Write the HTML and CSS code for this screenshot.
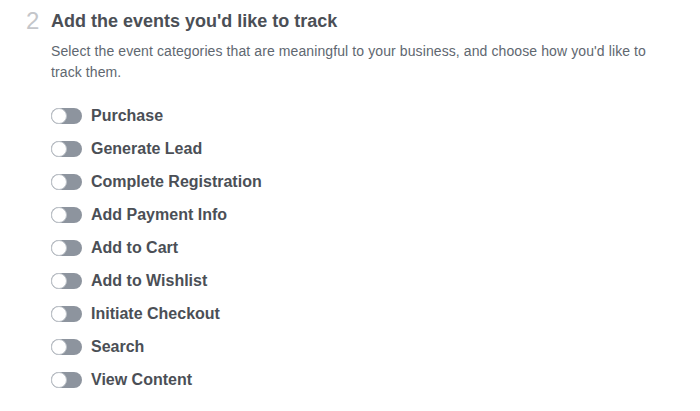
FILE: index.html
```html
<!DOCTYPE html>
<html>
<head>
    <title>Event Setup</title>
    <link rel="stylesheet" href="styles.css">
</head>
<body>
    <div class="step">
        <div class="step-num">2</div>
        <div class="step-body">
            <h2>Add the events you'd like to track</h2>
            <p class="desc">Select the event categories that are meaningful to your business, and choose how you'd like to track them.</p>
            <ul class="events">
                <li><span class="toggle"><span class="knob"></span></span>Purchase</li>
                <li><span class="toggle"><span class="knob"></span></span>Generate Lead</li>
                <li><span class="toggle"><span class="knob"></span></span>Complete Registration</li>
                <li><span class="toggle"><span class="knob"></span></span>Add Payment Info</li>
                <li><span class="toggle"><span class="knob"></span></span>Add to Cart</li>
                <li><span class="toggle"><span class="knob"></span></span>Add to Wishlist</li>
                <li><span class="toggle"><span class="knob"></span></span>Initiate Checkout</li>
                <li><span class="toggle"><span class="knob"></span></span>Search</li>
                <li><span class="toggle"><span class="knob"></span></span>View Content</li>
            </ul>
        </div>
    </div>
</body>
</html>
```

FILE: styles.css
```css
body {
    margin: 0;
    background-color: #fff;
    font-family: "Liberation Sans", Arial, sans-serif;
    color: #4b4f56;
}

.step {
    display: flex;
    padding: 7px 0 0 26px;
}

.step-num {
    width: 25px;
    font-size: 24px;
    line-height: 28px;
    color: #c4c6ca;
}

.step-body h2 {
    margin: 0;
    font-size: 18px;
    line-height: 28px;
    font-weight: bold;
    color: #4b4f56;
}

.desc {
    margin: 6px 0 0 0;
    max-width: 610px;
    font-size: 14px;
    line-height: 21px;
    color: #606770;
    letter-spacing: 0.1px;
}

.events {
    list-style: none;
    margin: 16px 0 0 0;
    padding: 0;
}

.events li {
    display: flex;
    align-items: center;
    height: 33.1px;
    font-size: 16px;
    font-weight: bold;
}

.toggle {
    position: relative;
    width: 31px;
    height: 16px;
    margin-right: 9px;
    border-radius: 8px;
    background-color: #8d949e;
}

.knob {
    position: absolute;
    left: 0;
    top: 0;
    width: 14px;
    height: 14px;
    border: 1px solid #bec3c9;
    border-radius: 50%;
    background-color: #fff;
}
```
